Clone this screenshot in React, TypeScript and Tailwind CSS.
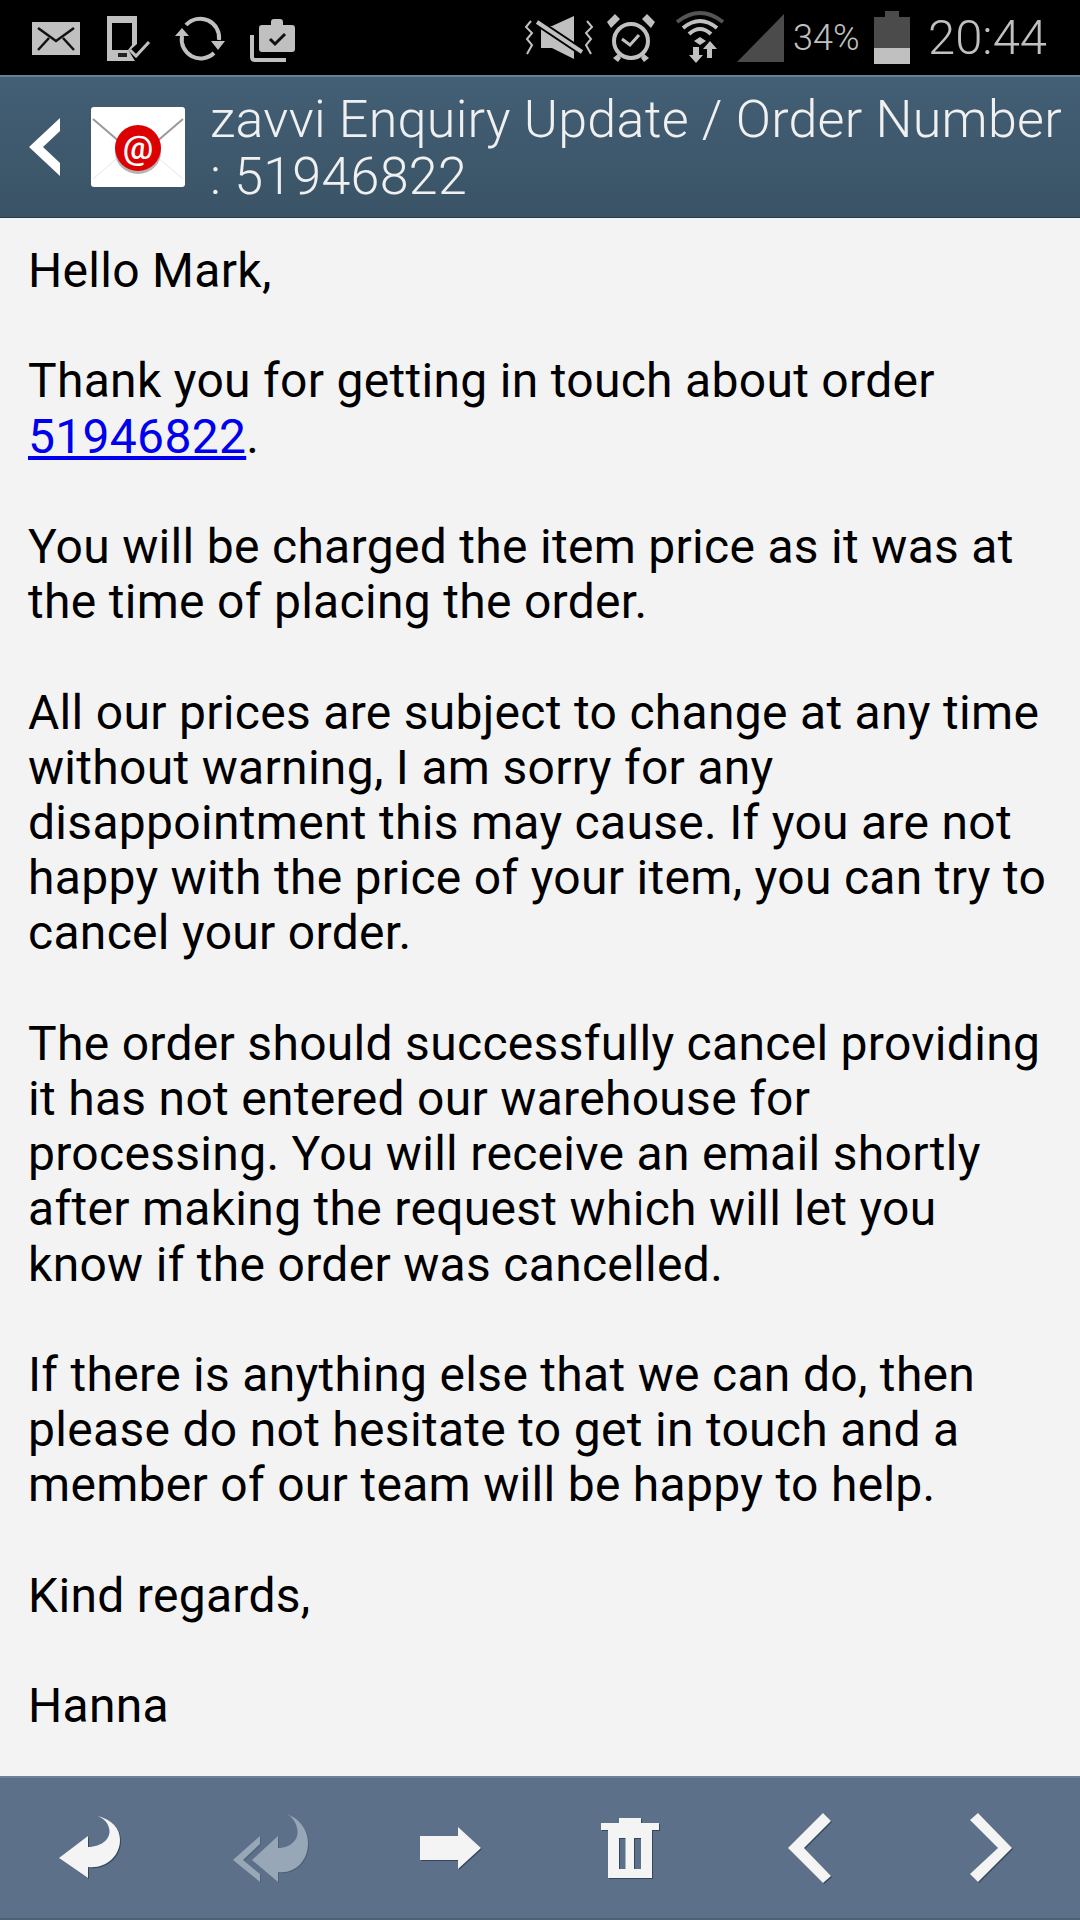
import React from "react";

function StatusIcons() {
  const c = "#c0c0c0";
  return (
    <svg width="790" height="75" viewBox="0 0 790 75" className="shrink-0">
      {/* mail */}
      <rect x="32" y="22" width="48" height="33" fill={c} />
      <path d="M38 28 L56 41 L74 28 M38 50 L49 38 M74 50 L63 38" stroke="#111" strokeWidth="2.5" fill="none" />
      {/* phone + check */}
      <path fillRule="evenodd" d="M107 16 H137 V44 L129 51 L135 61 H107 Z M112 23 V50 H128 L132 45 V23 Z" fill={c} />
      <rect x="118" y="53" width="9" height="4" fill="#222" />
      <path d="M130 50 L136 56 L149 42" stroke={c} strokeWidth="3" fill="none" />
      {/* sync */}
      <path d="M186 25 A19 19 0 0 1 219 40 M214 53 A19 19 0 0 1 182 36" stroke={c} strokeWidth="4" fill="none" />
      <path d="M175 36 H189 L182 28 Z M211 41 H225 L218 50 Z" fill={c} />
      {/* briefcase */}
      <path d="M259 28 Q259 25 262 25 H271 V22 Q271 19 274 19 H280 Q283 19 283 22 V25 H292 Q295 25 295 28 V49 Q295 52 292 52 H262 Q259 52 259 49 Z" fill={c} />
      <path d="M270 39 L275 44 L285 34" stroke="#111" strokeWidth="3" fill="none" />
      <path d="M252 35 V57 Q252 60 255 60 H286" stroke={c} strokeWidth="4" fill="none" />
      {/* mute */}
      <path d="M531 21 L526 27 L532 33 L527 39 L532 45 L527 54 M587 21 L592 27 L586 33 L591 39 L586 45 L591 54" stroke={c} strokeWidth="2" fill="none" />
      <path d="M541 26 H552 L574 16 V59 L552 48 H541 Z" fill={c} />
      <path d="M537 22 L582 52" stroke="#000" strokeWidth="8" />
      <path d="M537 22 L582 52" stroke={c} strokeWidth="4" />
      {/* alarm */}
      <circle cx="631" cy="41" r="17" fill="none" stroke={c} strokeWidth="4" />
      <path d="M622 39 L630 45 L639 35" stroke={c} strokeWidth="3" fill="none" />
      <path d="M607 22 L615 14 L620 19 L611 28 Z M655 22 L647 14 L642 19 L651 28 Z M613 58 L618 54 L621 58 L618 62 Z M649 58 L644 54 L641 58 L644 62 Z" fill={c} />
      {/* wifi */}
      <path d="M677 22 Q700 4 723 22" stroke="#555" strokeWidth="4" fill="none" />
      <path d="M683 28 Q700 14 717 28 M689 34 Q700 24 711 34" stroke={c} strokeWidth="4" fill="none" />
      <path d="M694 41 L700 37 L706 41 L700 45 Z" fill={c} />
      <path d="M693 47 H699 V55 H703 L696 63 L689 55 H693 Z M707 58 V49 H703 L710 41 L717 49 H712 V58 Z" fill={c} />
      {/* signal */}
      <path d="M737 62 L784 14 V62 Z" fill="#4b4b4b" />
    </svg>
  );
}

export default function App() {
  const paragraphs: React.ReactNode[] = [
    <>Hello Mark,</>,
    <>
      Thank you for getting in touch about order
      <br />
      <span className="text-[#0000ee] underline">51946822</span>.
    </>,
    <>
      You will be charged the item price as it was at
      <br />
      the time of placing the order.
    </>,
    <>
      All our prices are subject to change at any time
      <br />
      without warning, I am sorry for any
      <br />
      disappointment this may cause. If you are not
      <br />
      happy with the price of your item, you can try to
      <br />
      cancel your order.
    </>,
    <>
      The order should successfully cancel providing
      <br />
      it has not entered our warehouse for
      <br />
      processing. You will receive an email shortly
      <br />
      after making the request which will let you
      <br />
      know if the order was cancelled.
    </>,
    <>
      If there is anything else that we can do, then
      <br />
      please do not hesitate to get in touch and a
      <br />
      member of our team will be happy to help.
    </>,
    <>Kind regards,</>,
    <>Hanna</>,
  ];
  return (
    <div className="w-[1080px] h-[1920px] flex flex-col bg-[#f3f3f3] font-['Roboto',sans-serif] overflow-hidden">
      <div className="h-[75px] shrink-0 bg-black flex items-center">
        <StatusIcons />
        <span className="ml-[3px] w-[67px] text-[#c0c0c0] text-[36px] font-light leading-none whitespace-nowrap">34%</span>
        <div className="ml-[14px] w-[36px] h-[53px] flex flex-col items-center shrink-0">
          <div className="w-[14px] h-[6px] bg-[#4b4b4b]" />
          <div className="w-[36px] h-[31px] bg-[#4b4b4b]" />
          <div className="w-[36px] h-[16px] bg-[#c0c0c0]" />
        </div>
        <span className="ml-[18px] text-[#c0c0c0] text-[49px] font-light leading-none">20:44</span>
      </div>

      <div className="h-[143px] shrink-0 border-t-2 border-t-[#64809a] border-b border-b-[#2b3b49] bg-gradient-to-b from-[#435f75] to-[#3a5366] flex items-center">
        <svg width="31" height="58" viewBox="0 0 31 58" className="ml-[29px] shrink-0">
          <path d="M31 0 L0 29 L31 58 V45 L14 29 L31 13 Z" fill="#fff" />
        </svg>
        <div className="ml-[31px] w-[94px] h-[80px] bg-white rounded-[3px] relative shrink-0">
          <svg width="94" height="80" viewBox="0 0 94 80" className="absolute inset-0">
            <path d="M2 12 L30 36 M92 12 L64 36" stroke="#9a9a9a" strokeWidth="2" />
            <path d="M2 72 L30 48 M92 72 L64 48" stroke="#e6e6e6" strokeWidth="1" />
            <ellipse cx="47" cy="45" rx="23" ry="22" fill="#b5b5b5" />
            <circle cx="47" cy="41" r="23" fill="#dd0000" />
            <text x="47" y="52" textAnchor="middle" fontSize="34" fontWeight="500" fontFamily="Roboto" fill="#fff">@</text>
          </svg>
        </div>
        <div className="ml-[25px] mt-[1px] text-[#f0f0f0] text-[52px] tracking-[0.27px] font-[350] leading-[57px] whitespace-nowrap">
          zavvi Enquiry Update / Order Number
          <br />: 51946822
        </div>
      </div>

      <div className="flex-1 pl-[28px] pt-[25px] text-[48px] tracking-[0.3px] leading-[55.2px] text-black flex flex-col gap-[55.2px]">
        {paragraphs.map((p, i) => (
          <p key={i}>{p}</p>
        ))}
      </div>

      <div className="h-[144px] shrink-0 border-t-2 border-t-[#6c8296] border-b-2 border-b-[#4d6275] bg-[#5c7189] flex items-center">
        <svg width="1080" height="140" viewBox="0 0 1080 140" className="shrink-0">
          <g fill="#f4f4f4" style={{ filter: "drop-shadow(1px 1px 0 #33465a)" }}>
            <path d="M59 80 L88 58 V69 C102 69 112 60 109 50 C108 45 104 41 98 38 C112 42 120 50 120 62 C120 78 106 91 88 89 V100 Z" />
            <path d="M420 58 H458 V49 L481 70 L458 91 V82 H420 Z" />
            <path fillRule="evenodd" d="M619 40 H641 V45 H659 V52 H652 V100 H608 V52 H601 V45 H619 Z M619 60 V91 H625.5 V60 Z M634 60 V91 H641 V60 Z" />
            <path d="M788 70 L823 35 L831 43 L804 70 L831 98 L823 105 Z" />
            <path d="M1012 70 L978 35 L970 42 L998 70 L970 96 L978 104 Z" />
          </g>
          <g fill="#98a7b7" style={{ filter: "drop-shadow(1px 1px 0 #4d6275)" }}>
            <path d="M252 82 L278 58 V70 C292 70 300 60 297 50 C296 44 292 39 287 36 C300 41 308 52 308 65 C308 83 295 96 278 94 V104 Z" />
            <path d="M233 82 L260 58 V66 L243 82 L260 96 V104 Z" />
          </g>
        </svg>
      </div>
    </div>
  );
}
